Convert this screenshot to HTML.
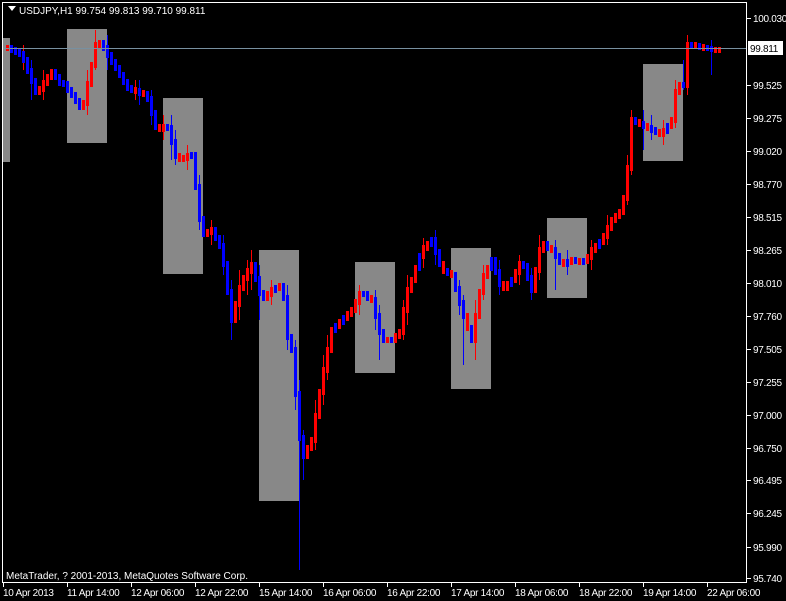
<!DOCTYPE html>
<html><head><meta charset="utf-8"><style>
html,body{margin:0;padding:0;background:#000;width:786px;height:601px;overflow:hidden}
svg{display:block}
text{font-family:"Liberation Sans",sans-serif;font-size:10px;fill:#fff}
.ax text{letter-spacing:-0.3px}
</style></head><body>
<svg width="786" height="601" xmlns="http://www.w3.org/2000/svg">
<rect width="786" height="601" fill="#000"/>
<g fill="#888">
<rect x="3" y="38" width="7" height="124"/>
<rect x="67" y="29" width="40" height="114"/>
<rect x="163" y="98" width="40" height="176"/>
<rect x="259" y="250" width="40" height="251"/>
<rect x="355" y="262" width="40" height="111"/>
<rect x="451" y="248" width="40" height="141"/>
<rect x="547" y="218" width="40" height="80"/>
<rect x="643" y="64" width="40" height="97"/>
</g>
<path fill="none" stroke="#0000ff" stroke-width="1" d="M299.5 380V570M303.5 430V480M31.5 60V100M107.5 35V70M171.5 115V160M199.5 175V230M231.5 280V340M295.5 340V410M379.5 305V360M463.5 295V365M555.5 240V290M643.5 110V150M683.5 60V90M711.5 40V75M151.5 90V125M259.5 265V320M139.5 80V105M175.5 130V165M223.5 235V275M287.5 285V350M375.5 290V330M435.5 230V265M459.5 280V315M499.5 260V295M531.5 268V300M567.5 250V275M651.5 115V140"/>
<path fill="none" stroke="#ff0000" stroke-width="1" d="M95.5 30V70M87.5 70V115M239.5 270V320M251.5 250V290M315.5 400V450M327.5 335V380M407.5 275V325M475.5 300V360M539.5 235V280M627.5 155V205M631.5 110V175M687.5 35V95M675.5 80V128M163.5 115V140M23.5 45V70M43.5 70V100M135.5 80V100M187.5 145V170M211.5 220V245M247.5 260V295M271.5 280V305M323.5 355V405M359.5 285V315M403.5 300V340M423.5 238V268M483.5 265V300M519.5 255V285M591.5 240V270M607.5 215V245M663.5 120V145"/>
<path fill="none" stroke="#ff0000" stroke-width="3" d="M7.5 45V51M39.5 86V95M43.5 80V92M47.5 74V86M51.5 69V80M83.5 100V110M87.5 81V106M91.5 62V87M95.5 42V68M99.5 40V48M135.5 87V94M143.5 90V97M159.5 124V132M163.5 124V132M179.5 153V162M183.5 155V162M187.5 153V161M207.5 229V237M211.5 227V235M235.5 301V323M239.5 285V307M243.5 275V291M247.5 268V281M251.5 262V274M267.5 291V301M271.5 287V297M279.5 283V291M307.5 445V459M311.5 437V451M315.5 413V443M319.5 389V419M323.5 367V395M327.5 347V373M331.5 327V353M339.5 319V329M347.5 311V321M351.5 307V317M355.5 299V313M359.5 291V305M371.5 295V303M387.5 337V343M395.5 333V343M399.5 329V339M403.5 307V335M407.5 287V313M411.5 277V293M415.5 265V283M423.5 245V259M427.5 241V251M443.5 261V274M451.5 270V278M467.5 313V331M475.5 313V343M479.5 289V319M483.5 273V295M487.5 265V279M503.5 281V291M507.5 281V291M515.5 269V283M519.5 261V275M535.5 267V293M539.5 247V273M543.5 241V253M551.5 245V253M563.5 259V267M571.5 257V265M579.5 258V265M587.5 254V264M591.5 247V260M595.5 243V253M603.5 233V245M607.5 225V239M611.5 217V231M615.5 213V223M619.5 209V219M623.5 195V215M627.5 165V201M631.5 117V171M639.5 119V127M647.5 123V131M659.5 129V137M663.5 128V137M671.5 117V129M675.5 89V123M679.5 82V95M687.5 42V88M695.5 42V49M703.5 44V51M715.5 47V53M719.5 47V53"/>
<path fill="none" stroke="#0000ff" stroke-width="3" d="M11.5 45V53M15.5 47V55M19.5 49V57M23.5 51V63M27.5 57V74M31.5 68V84M35.5 78V95M55.5 69V80M59.5 74V86M63.5 80V87M67.5 81V93M71.5 87V98M75.5 92V104M79.5 98V110M103.5 40V51M107.5 45V58M111.5 52V65M115.5 59V71M119.5 65V78M123.5 72V85M127.5 79V91M131.5 85V93M139.5 88V96M147.5 91V102M151.5 96V116M155.5 110V130M167.5 124V131M171.5 125V145M175.5 139V159M191.5 152V159M195.5 152V190M199.5 184V222M203.5 216V237M215.5 227V241M219.5 235V249M223.5 243V267M227.5 261V295M231.5 289V323M255.5 262V282M259.5 276V296M263.5 290V301M275.5 285V293M283.5 283V301M287.5 295V340M291.5 334V353M295.5 347V397M299.5 391V441M303.5 435V459M335.5 323V333M343.5 315V325M363.5 291V297M367.5 291V301M375.5 297V319M379.5 313V335M383.5 329V343M391.5 337V343M419.5 253V271M431.5 237V247M435.5 237V255M439.5 249V267M447.5 268V276M455.5 272V292M459.5 286V306M463.5 300V319M471.5 325V343M491.5 257V271M495.5 257V275M499.5 269V287M511.5 277V287M523.5 261V269M527.5 263V281M531.5 275V293M547.5 241V251M555.5 247V259M559.5 253V265M567.5 259V267M575.5 257V264M583.5 258V265M599.5 239V249M635.5 117V125M643.5 121V129M651.5 125V133M655.5 127V135M667.5 123V134M683.5 82V88M691.5 42V48M699.5 43V50M707.5 45V51M711.5 46V52"/>
<line x1="2" y1="48.5" x2="746" y2="48.5" stroke="#7890a0" stroke-width="1"/>
<rect x="2.5" y="2.5" width="744" height="580" fill="none" stroke="#fff" stroke-width="1"/>
<g stroke="#fff">
<path d="M747 18.5h4M747 85.5h4M747 118.5h4M747 151.5h4M747 184.5h4M747 217.5h4M747 250.5h4M747 283.5h4M747 316.5h4M747 349.5h4M747 382.5h4M747 415.5h4M747 448.5h4M747 480.5h4M747 513.5h4M747 547.5h4M747 578.5h4"/>
<path d="M3.5 583v4M67.5 583v4M131.5 583v4M195.5 583v4M259.5 583v4M323.5 583v4M387.5 583v4M451.5 583v4M515.5 583v4M579.5 583v4M643.5 583v4M707.5 583v4"/>
</g>
<g class="ax">
<text x="753" y="22">100.030</text><text x="753" y="89">99.525</text><text x="753" y="122">99.275</text><text x="753" y="155">99.020</text><text x="753" y="188">98.770</text><text x="753" y="221">98.515</text><text x="753" y="254">98.265</text><text x="753" y="287">98.010</text><text x="753" y="320">97.760</text><text x="753" y="353">97.505</text><text x="753" y="386">97.255</text><text x="753" y="419">97.000</text><text x="753" y="452">96.750</text><text x="753" y="484">96.495</text><text x="753" y="517">96.245</text><text x="753" y="551">95.990</text><text x="753" y="582">95.740</text>
</g>
<g class="ax">
<text x="3" y="596">10 Apr 2013</text><text x="67" y="596">11 Apr 14:00</text><text x="131" y="596">12 Apr 06:00</text><text x="195" y="596">12 Apr 22:00</text><text x="259" y="596">15 Apr 14:00</text><text x="323" y="596">16 Apr 06:00</text><text x="387" y="596">16 Apr 22:00</text><text x="451" y="596">17 Apr 14:00</text><text x="515" y="596">18 Apr 06:00</text><text x="579" y="596">18 Apr 22:00</text><text x="643" y="596">19 Apr 14:00</text><text x="707" y="596">22 Apr 06:00</text>
</g>
<path d="M8 6 L16 6 L12 11 Z" fill="#fff"/>
<text x="19" y="14">USDJPY,H1  99.754 99.813 99.710 99.811</text>
<text x="6" y="579">MetaTrader, ? 2001-2013, MetaQuotes Software Corp.</text>
<rect x="748" y="41" width="35" height="14" fill="#fff"/>
<text x="750" y="52" style="fill:#000;letter-spacing:-0.3px">99.811</text>
</svg>
</body></html>
